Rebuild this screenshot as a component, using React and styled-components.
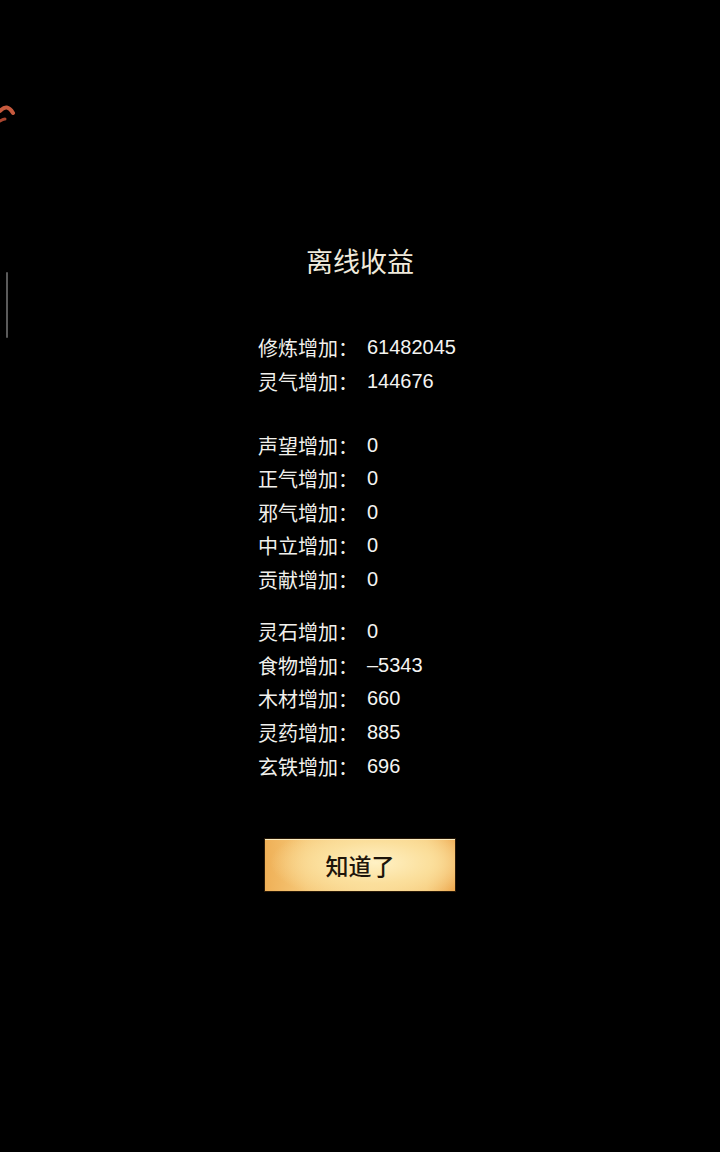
import React from "react";
import styled, { createGlobalStyle } from "styled-components";

const Global = createGlobalStyle`
  html, body {
    margin: 0;
    padding: 0;
    background: #000;
  }
  body {
    font-family: "Liberation Sans", "Noto Sans CJK SC", sans-serif;
  }
`;

const Screen = styled.div`
  position: relative;
  width: 720px;
  min-height: 1152px;
  background: #000;
  overflow: hidden;
  display: flex;
  flex-direction: column;
  align-items: center;
  padding-top: 243px;
  box-sizing: border-box;
`;

const EdgeArc = styled.svg`
  position: absolute;
  left: 0;
  top: 100px;
  width: 16px;
  height: 26px;
`;

const EdgeBar = styled.div`
  position: absolute;
  left: 6px;
  top: 272px;
  width: 2px;
  height: 66px;
  background: #5a5a5a;
  border-radius: 1px;
`;

const Title = styled.h1`
  margin: 0;
  font-family: "Noto Sans CJK SC", sans-serif;
  font-weight: 400;
  font-size: 27px;
  line-height: 36px;
  color: #efeadc;
  letter-spacing: 0;
`;

const List = styled.div`
  width: 204px;
  margin-top: 52px;
  display: flex;
  flex-direction: column;
`;

const Group = styled.div`
  display: flex;
  flex-direction: column;
  margin-top: ${(p) => p.$gap || 0}px;
`;

const Row = styled.div`
  display: flex;
  align-items: center;
  height: ${(p) => p.$h || 33.6}px;
  font-size: 20px;
  color: #f1f0ec;
`;

const Label = styled.span`
  width: 109px;
  flex: none;
  font-family: "Noto Sans CJK SC", sans-serif;
  white-space: nowrap;
`;

const Value = styled.span`
  font-family: "Liberation Sans", Arial, sans-serif;
  color: #f4f4f2;
`;

const Button = styled.button`
  margin-top: 56px;
  width: 190px;
  height: 52px;
  border: none;
  box-shadow: 0 0 0 1px #2a1a08, inset 0 1px 0 #fcecc0;
  background:
    radial-gradient(ellipse 65% 90% at 58% 45%, #fff1c4 0%, #fbdf9c 45%, transparent 85%),
    linear-gradient(90deg, #efb057 0%, #f6c97a 22%, #f9d994 55%, #f6cb7c 85%, #eeaa52 100%);
  font-family: "Noto Sans CJK SC", sans-serif;
  font-size: 23px;
  font-weight: 500;
  color: #1e150b;
  cursor: pointer;
  padding: 0;
  display: flex;
  align-items: center;
  justify-content: center;
`;

const groups = [
  {
    gap: 0,
    h: 33.6,
    rows: [
      ["修炼增加：", "61482045"],
      ["灵气增加：", "144676"],
    ],
  },
  {
    gap: 30.4,
    h: 33.5,
    rows: [
      ["声望增加：", "0"],
      ["正气增加：", "0"],
      ["邪气增加：", "0"],
      ["中立增加：", "0"],
      ["贡献增加：", "0"],
    ],
  },
  {
    gap: 18.4,
    h: 33.75,
    rows: [
      ["灵石增加：", "0"],
      ["食物增加：", "–5343"],
      ["木材增加：", "660"],
      ["灵药增加：", "885"],
      ["玄铁增加：", "696"],
    ],
  },
];

export default function App() {
  return (
    <>
      <Global />
      <Screen>
        <EdgeArc viewBox="0 0 16 26">
          <path
            d="M0 11 Q7 3 13 13"
            fill="none"
            stroke="#c65a3e"
            strokeWidth="4"
            strokeLinecap="round"
          />
          <path
            d="M0 21 Q3 19 5 19"
            fill="none"
            stroke="#a8452f"
            strokeWidth="3"
            strokeLinecap="round"
          />
        </EdgeArc>
        <EdgeBar />
        <Title>离线收益</Title>
        <List>
          {groups.map((g, i) => (
            <Group key={i} $gap={g.gap}>
              {g.rows.map(([l, v]) => (
                <Row key={l} $h={g.h}>
                  <Label>{l}</Label>
                  <Value>{v}</Value>
                </Row>
              ))}
            </Group>
          ))}
        </List>
        <Button>知道了</Button>
      </Screen>
    </>
  );
}
